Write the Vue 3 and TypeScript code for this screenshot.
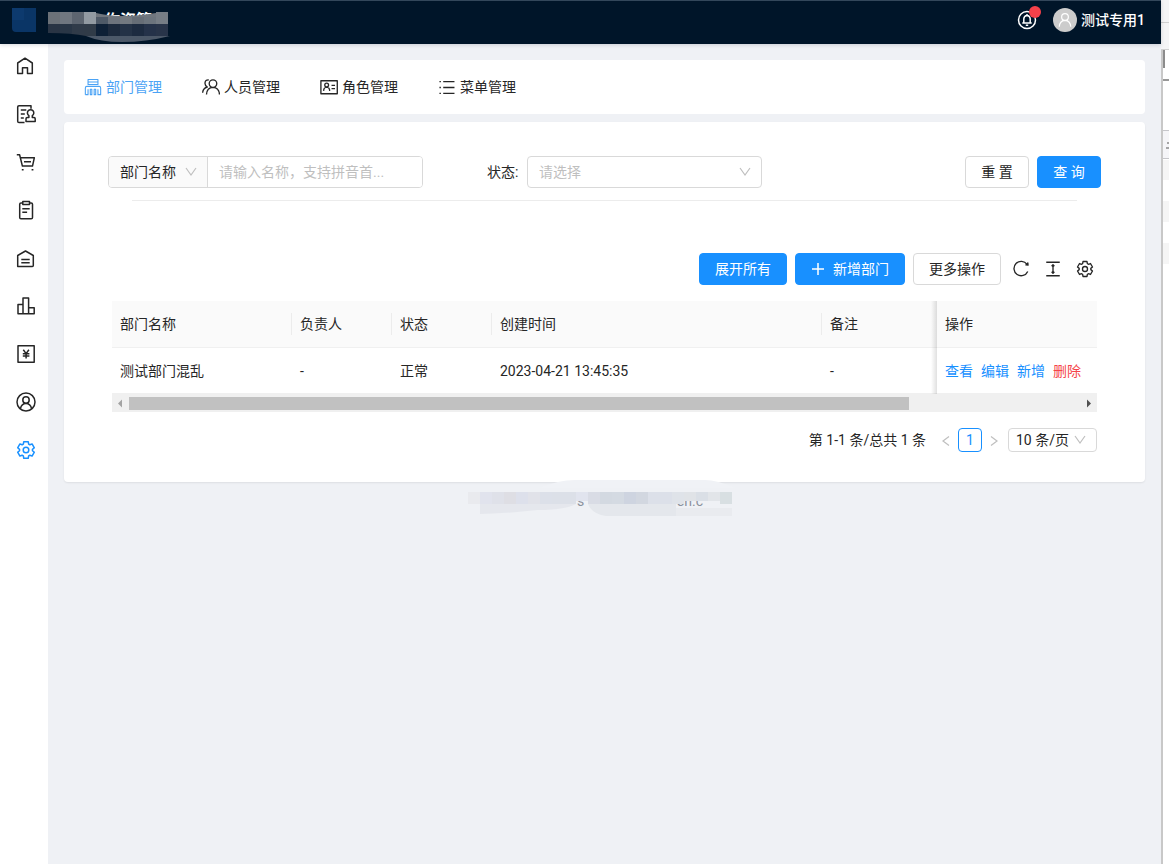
<script setup lang="ts">
import { ref } from 'vue'

function gearPath(): string {
  const points: string[] = []
  for (let i = 0; i < 6; i++) {
    for (const [r, offset] of [[6.5, -24], [8.6, -15], [8.6, 15], [6.5, 24]]) {
      const a = ((i * 60 + offset - 90) * Math.PI) / 180
      points.push(`${(10 + r * Math.cos(a)).toFixed(2)} ${(10 + r * Math.sin(a)).toFixed(2)}`)
    }
  }
  return `M${points.join('L')}Z`
}

const gear = gearPath() + 'M12.800 10a2.800 2.800 0 1 1-5.600 0a2.800 2.800 0 0 1 5.600 0z'

const sideItems = [
  { label: '首页', d: 'M1.7 17.5V7L9 2.2l7.3 4.8V17.5H11.5V11.8h-5v5.7H1.7z' },
  { label: '审核', d: 'M15 4.8V1.7H3q-1.3 0-1.3 1.3V17.3q0 1.3 1.3 1.3H8.5M4.8 6h5.5M4.8 10h4M4.8 14h3M12.9 13.6V11.6a3.2 3.2 0 1 1 3.4 0v2h1.7q1.2 0 1.2 1.2v2.6h-9.2v-2.6q0-1.2 1.2-1.2z' },
  { label: '采购', d: 'M.8 2.7H3.6L6.4 14.1H16.5L18.3 5.8H4.4M8 9.8h7M5.8 17.8h1.8M15.6 17.8h1.8' },
  { label: '单据', d: 'M6.8 3H5q-1.3 0-1.3 1.3V17.5q0 1.3 1.3 1.3H15.2q1.3 0 1.3-1.3V4.3q0-1.3-1.3-1.3H13.5M6.8 1.5h6.7v3H6.8zM6.3 8.7h7.4M6.3 12.3h4.8' },
  { label: '仓库', d: 'M1.7 18.5V7.5L9.5 3l7.8 4.5V17.5q0 1-1 1zM5.3 11.5h8.4M5.3 14.7h8.4' },
  { label: '统计', d: 'M2 8.5h5v9.3H2zM7 2h5.6v15.8H7zM12.6 11.7h5.6v6.1h-5.6z' },
  { label: '财务', d: 'M2 1.8h16.2v16.4H2zM7.3 5.8l2.8 3.8l2.8-3.8M10.1 9.6v5M6.8 9.8h6.6M6.8 12.1h6.6' },
  { label: '用户', d: 'M19 10a9 9 0 1 1-18 0a9 9 0 0 1 18 0zM13.2 8a3.2 3.2 0 1 1-6.4 0a3.2 3.2 0 0 1 6.4 0zM4.4 16.8q1.1-5.2 5.6-5.2t5.6 5.2' },
  { label: '设置', d: gear },
]

const tabs = [
  { label: '部门管理', thin: true, d: 'M4.5 1.7h11v5.6h-11zM4.5 4.5h11M1.5 18.5V11q0-1.700 1.700-1.700h13.600q1.700 0 1.700 1.700V18.500h-3V12.500M1.500 18.500h3V12.500M7 18.500V12.500h1.700v6zM11.300 18.500V12.500H13v6z' },
  { label: '人员管理', d: 'M16.4 6.2a4.2 4.2 0 1 1-8.4 0a4.2 4.2 0 0 1 8.4 0zM5 18.3q.4-7.7 7.2-7.9q6.8.2 7.2 7.9M7.5 2.2q-3.9-.4-4.2 3.5q-.1 2.8 2.6 4.3q-4.8 1.4-5.2 6.4' },
  { label: '角色管理', d: 'M1 3h18.2v14.5H1zM9.5 7.8a2.1 2.1 0 1 1-4.2 0a2.1 2.1 0 0 1 4.2 0zM4 14.3q.2-4 3.4-4.2q3.2.2 3.4 4.2M12.8 8.2h3.9M12.8 11.8h3.9' },
  { label: '菜单管理', d: 'M5.8 4h12.5M5.8 10.5h12.5M5.8 17h12.5M1.6 4h1.6M1.6 10.5h1.6M1.6 17h1.6' },
]

const tools = [
  { label: '刷新', d: 'M16.7 4.8A8 8 0 1 0 17.5 12.8M15.5 5.5l2.3.2l-.2-2.4z' },
  { label: '密度', d: 'M2.5 2.5h15M2.5 17.5h15M10 5.5v9M8.5 7l1.5-1.7l1.5 1.7M8.5 13l1.5 1.7l1.5-1.7' },
  { label: '列设置', d: gear },
]

const rows = [
  { name: '测试部门混乱', owner: '-', status: '正常', created: '2023-04-21 13:45:35', remark: '-' },
]

const keyword = ref('')
const status = ref('')
const activeTab = ref(0)

const titleTop = ['#6b7178', '#707780', '#5d6570', '#929aa2', '#4e5967', '#6d737c', '#737980', '#666d76', '#6c747d', '#767d85']
const titleBottom = ['#293444', '#293646', '#303b49', '#303b48', '#0e2036', '#1d2a3d', '#243246', '#1d2b40', '#253249', '#283449']
const footTop = ['#e9eaee', '#e1e3ed', '#dfe1e9', '#dedee4', '#dde0eb', '#e1e2e9', '#dce0e9', '#dce0e8', '#dce0e8', '#e1e4ee', '#d9dce5', '#d3d9e1', '#d4dae2', '#ced4e0', '#d2d7e0', '#dce0e9', '#dce0e9', '#dfe3e9', '#e0e3e7', '#dadfe6', '#e2e5e9', '#d8dfe2']
</script>

<template>
  <div class="window">
    <div class="app">
      <header class="topbar">
        <svg class="brand" width="180" height="44" viewBox="0 0 180 44" aria-hidden="true">
          <path d="M12 8h12v16H12z" fill="#0d3a6e" />
          <path d="M24 8h12v24H24zM12 20h12v12h-8q-4 0-4-4z" fill="#0a3566" />
          <text class="brand-text" x="104" y="26">作资管</text>
          <rect v-for="(c, i) in titleBottom" :key="'b' + i" :x="48 + i * 12" y="23" width="12" height="13" :fill="c" />
          <path d="M48 33q24 0 38 3H48z" fill="#001529" />
          <rect v-for="(c, i) in titleTop" :key="'t' + i" :x="48 + i * 12" :y="i < 4 || i > 8 ? 12 : 16" width="12" :height="i < 4 || i > 8 ? 12 : 8" :fill="c" />
          <path d="M96 13q24 6 60 0v4H96z" fill="#70767e" />
          <path d="M86 36h84q-24 6-48 6q-22 0-36-6z" fill="#4c5868" />
        </svg>
        <div class="account">
          <button class="bell" type="button" aria-label="通知">
            <svg width="20" height="20" viewBox="0 0 20 20" class="line"><path d="M18.5 10a8.5 8.5 0 1 1-17 0a8.5 8.5 0 0 1 17 0zM6.8 12.8V8.8q.2-3.2 3.2-3.4q3 .2 3.2 3.4v4M5.3 13.1h9.4M10 5.3V4M8.8 15.3h2.4" /></svg>
            <span class="dot"></span>
          </button>
          <span class="avatar">
            <svg width="16" height="16" viewBox="0 0 20 20" class="line"><path d="M14.2 6.2a4.2 4.2 0 1 1-8.4 0a4.2 4.2 0 0 1 8.4 0zM2.8 18.5q.4-7.6 7.2-8.1q6.8.5 7.2 8.1" /></svg>
          </span>
          <span class="user">测试专用1</span>
        </div>
      </header>

      <div class="body">
        <nav class="side">
          <a v-for="(item, i) in sideItems" :key="item.label" href="#" :class="{ active: i === 8 }" :aria-label="item.label">
            <svg width="20" height="20" viewBox="0 0 20 20" class="line"><path :d="item.d" /></svg>
          </a>
        </nav>

        <main>
          <nav class="card tabs">
            <a v-for="(tab, i) in tabs" :key="tab.label" href="#" :class="{ active: i === activeTab }" @click.prevent="activeTab = i">
              <svg width="18" height="18" viewBox="0 0 20 20" class="line" :class="{ thin: tab.thin }"><path :d="tab.d" /></svg>
              {{ tab.label }}
            </a>
          </nav>

          <section class="card content">
            <form class="filters" @submit.prevent>
              <div class="combo">
                <span class="picker prefix">
                  <select aria-label="搜索字段"><option>部门名称</option></select>
                  <svg class="arrow" width="12" height="12" viewBox="0 0 12 12"><path d="M1 2l5 7l5-7" /></svg>
                </span>
                <input v-model="keyword" type="text" aria-label="部门名称" placeholder="请输入名称，支持拼音首..." />
              </div>
              <label class="status-label" for="status">状态:</label>
              <span class="picker status">
                <select id="status" v-model="status" class="empty"><option value="">请选择</option></select>
                <svg class="arrow" width="12" height="12" viewBox="0 0 12 12"><path d="M1 2l5 7l5-7" /></svg>
              </span>
              <div class="filter-actions">
                <button class="btn" type="reset">重 置</button>
                <button class="btn primary" type="submit">查 询</button>
              </div>
            </form>
            <hr />

            <div class="toolbar">
              <button class="btn primary" type="button">展开所有</button>
              <button class="btn primary" type="button">
                <svg width="14" height="14" viewBox="0 0 14 14" class="plus"><path d="M7 1v12M1 7h12" /></svg>
                新增部门
              </button>
              <button class="btn" type="button">更多操作</button>
              <button v-for="tool in tools" :key="tool.label" class="tool" type="button" :aria-label="tool.label">
                <svg width="18" height="18" viewBox="0 0 20 20" class="line"><path :d="tool.d" /></svg>
              </button>
            </div>

            <div class="table-area">
              <table>
                <colgroup>
                  <col class="c-name" /><col class="c-small" /><col class="c-small" /><col class="c-time" /><col /><col class="c-ops" />
                </colgroup>
                <thead>
                  <tr>
                    <th><span>部门名称</span></th>
                    <th><span>负责人</span></th>
                    <th><span>状态</span></th>
                    <th><span>创建时间</span></th>
                    <th>备注</th>
                    <th class="fixed">操作</th>
                  </tr>
                </thead>
                <tbody>
                  <tr v-for="row in rows" :key="row.name">
                    <td>{{ row.name }}</td>
                    <td>{{ row.owner }}</td>
                    <td>{{ row.status }}</td>
                    <td>{{ row.created }}</td>
                    <td>{{ row.remark }}</td>
                    <td class="fixed">
                      <div class="ops">
                        <a href="#">查看</a><a href="#">编辑</a><a href="#">新增</a><a href="#" class="danger">删除</a>
                      </div>
                    </td>
                  </tr>
                </tbody>
              </table>
              <div class="scrollbar" aria-hidden="true">
                <svg width="17" height="18" viewBox="0 0 17 18"><path d="M10 5.5v8L6 9.5z" fill="#a3a3a3" /></svg>
                <div class="track"><div class="thumb"></div></div>
                <svg width="17" height="18" viewBox="0 0 17 18"><path d="M7 5.5v8l4-4z" fill="#505050" /></svg>
              </div>

              <div class="pagination">
                <span class="total">第 1-1 条/总共 1 条</span>
                <button class="step" type="button" aria-label="上一页"><svg width="12" height="12" viewBox="0 0 12 12"><path d="M9 2.5L3 7l6 4.5" /></svg></button>
                <button class="page" type="button">1</button>
                <button class="step" type="button" aria-label="下一页"><svg width="12" height="12" viewBox="0 0 12 12"><path d="M3 2.5l6 4.5L3 11.5" /></svg></button>
                <span class="picker size">
                  <select aria-label="每页条数"><option>10 条/页</option></select>
                  <svg class="arrow" width="12" height="12" viewBox="0 0 12 12"><path d="M1 2l5 7l5-7" /></svg>
                </span>
              </div>
            </div>
          </section>

          <footer>
            <svg width="320" height="38" viewBox="0 0 320 38" aria-hidden="true">
              <path d="M90 8Q108 0 125 0h130q12 0 30 8z" fill="#f0f2f6" />
              <text class="foot-text" x="127" y="26">s</text>
              <text class="foot-text" x="227" y="26">sn.c</text>
              <path d="M30 24h96q-12 6-38 6q-38 4-58 4z" fill="#e5e7ed" />
              <path d="M138 24h88v12h-70q-14-2-18-12z" fill="#e4e7ec" />
              <path d="M226 28h56v8h-56z" fill="#e9ebef" />
              <rect v-for="(c, i) in footTop" :key="i" :x="18 + i * 12" y="12" width="12" :height="i === 9 || i === 18 || i === 19 || i === 20 ? 9 : 12" :fill="c" />
            </svg>
          </footer>
        </main>
      </div>
    </div>

    <aside class="edge" aria-hidden="true">
      <svg width="8" height="280" viewBox="0 0 8 280">
        <path d="M0 0h8v50H0z" fill="#f5f5f6" />
        <path d="M0 22h8v1H0zM0 49h8v1H0z" fill="#d0d0d0" />
        <path d="M0 50h2v230H0z" fill="#c8c8c8" />
        <path d="M2 50h2v18H2z" fill="#8c8c8c" />
        <path d="M2 79h6v2H2z" fill="#989898" />
        <path d="M2 130h6v29H2z" fill="#f5f5f8" />
        <path d="M2 130h6v1H2zM2 158h6v1H2z" fill="#c6c6ca" />
        <path d="M6 143h2M5 148h3" stroke="#555" />
        <path d="M2 160h6v20H2zM2 201h6v21H2zM2 243h6v21H2z" fill="#f5f5f5" />
      </svg>
    </aside>
  </div>
</template>

<style>
body {
  margin: 0;
}
</style>

<style scoped>
* {
  box-sizing: border-box;
}
.window {
  display: flex;
  min-height: 100vh;
  background: #fff;
  color: #262626;
  font: 14px/22px Roboto, "Noto Sans CJK SC", sans-serif;
}
.app {
  flex: 1;
  min-width: 0;
  display: flex;
  flex-direction: column;
  background: #eff1f5;
}
.edge {
  width: 8px;
  background: linear-gradient(to right, #c8c8c8 2px, #fff 2px);
}
.edge svg,
.brand {
  display: block;
}
a {
  color: inherit;
  text-decoration: none;
}
button,
input,
select {
  margin: 0;
  font: inherit;
  color: inherit;
}
.line {
  display: block;
  fill: none;
  stroke: currentColor;
  stroke-width: 1.5;
  stroke-linejoin: round;
}
.line.thin {
  stroke-width: 1.2;
}
.topbar {
  position: relative;
  height: 44px;
  display: flex;
  justify-content: space-between;
  background: #001529;
  border-top: 1px solid #33475b;
  box-shadow: 0 1px 4px rgba(0, 21, 41, 0.16);
}
.brand {
  margin-top: -1px;
}
.brand-text {
  font-size: 16px;
  font-weight: 700;
  fill: #fff;
}
.account {
  display: flex;
  align-items: center;
  height: 38px;
  padding-right: 16px;
  color: #fff;
}
.bell {
  position: relative;
  width: 20px;
  height: 20px;
  padding: 0;
  border: 0;
  background: none;
  margin-right: 16px;
}
.dot {
  position: absolute;
  top: -4px;
  right: -4px;
  width: 12px;
  height: 12px;
  border-radius: 50%;
  background: #f5414a;
}
.avatar {
  display: grid;
  place-items: center;
  width: 24px;
  height: 24px;
  margin-right: 4px;
  border-radius: 50%;
  background: #ccc;
}
.user {
  font-weight: 500;
}
.body {
  flex: 1;
  display: flex;
}
.side {
  width: 48px;
  display: flex;
  flex-direction: column;
  gap: 8px;
  padding-top: 2px;
  background: #fff;
}
.side a {
  height: 40px;
  display: flex;
  align-items: center;
  padding-left: 16px;
}
.side .active {
  color: #1890ff;
}
.tabs .active {
  color: #4ba3f5;
}
main {
  flex: 1;
  min-width: 0;
  padding: 16px 16px 0;
}
.card {
  background: #fff;
  border-radius: 4px;
}
.tabs {
  display: flex;
  gap: 40px;
  padding: 16px 20px;
  margin-bottom: 8px;
}
.tabs a {
  display: flex;
  align-items: center;
  gap: 4px;
}
.content {
  padding: 34px 44px 30px;
  box-shadow: 0 1px 2px rgba(0, 0, 0, 0.08);
}
.filters {
  display: flex;
  align-items: center;
}
.combo {
  display: flex;
  width: 315px;
  height: 32px;
  border: 1px solid #d9d9d9;
  border-radius: 4px;
  overflow: hidden;
}
.combo input {
  flex: 1;
  min-width: 0;
  border: 0;
  padding: 0 11px;
  background: #fff;
  outline: none;
}
.combo input::placeholder {
  color: #bfbfbf;
  opacity: 1;
}
.picker {
  display: grid;
  align-items: center;
}
.picker select,
.picker .arrow {
  grid-area: 1 / 1;
}
.picker select {
  width: 100%;
  height: 100%;
  padding: 0 11px;
  border: 0;
  background: none;
  appearance: none;
  outline: none;
}
.arrow {
  justify-self: end;
  margin-right: 10px;
  pointer-events: none;
}
.arrow path,
.step path {
  fill: none;
  stroke: #bfbfbf;
  stroke-width: 1.2;
}
.prefix {
  width: 99px;
  background: #fafafa;
  border-right: 1px solid #d9d9d9;
}
.status-label {
  margin-left: 64px;
  width: 40px;
}
.status {
  width: 235px;
  height: 32px;
  border: 1px solid #d9d9d9;
  border-radius: 4px;
}
.picker .empty {
  color: #bfbfbf;
}
.filter-actions {
  display: flex;
  gap: 8px;
  margin-left: auto;
}
.btn {
  display: flex;
  align-items: center;
  justify-content: center;
  gap: 8px;
  min-width: 64px;
  height: 32px;
  padding: 0 15px;
  border: 1px solid #d9d9d9;
  border-radius: 4px;
  background: #fff;
}
.btn.primary {
  color: #fff;
  background: #1890ff;
  border-color: #1890ff;
}
.plus {
  fill: none;
  stroke: currentColor;
  stroke-width: 1.5;
}
hr {
  height: 1px;
  margin: 12px 24px 52px;
  border: 0;
  background: #ececec;
}
.toolbar {
  display: flex;
  justify-content: flex-end;
  gap: 8px;
  margin-bottom: 16px;
  padding-right: 4px;
}
.tool {
  width: 24px;
  padding: 0 3px;
  border: 0;
  background: none;
}
.table-area {
  margin: 0 4px;
}
table {
  width: 100%;
  table-layout: fixed;
  border-collapse: separate;
  border-spacing: 0;
}
.c-name {
  width: 180px;
}
.c-small {
  width: 100px;
}
.c-time {
  width: 330px;
}
.c-ops {
  width: 160px;
}
th,
td {
  height: 46px;
  padding: 0 0 0 8px;
  font-weight: 400;
  text-align: left;
  border-bottom: 1px solid #f0f0f0;
}
th {
  height: 47px;
  background: #fafafa;
}
th span {
  display: block;
  border-right: 1px solid #ececec;
}
.fixed {
  position: relative;
}
.fixed::before {
  content: "";
  position: absolute;
  top: 0;
  bottom: -1px;
  left: -6px;
  width: 6px;
  background: linear-gradient(to left, rgba(0, 0, 0, 0.12), rgba(0, 0, 0, 0));
}
.ops {
  display: flex;
  gap: 8px;
  color: #1890ff;
}
.danger {
  color: #f5444a;
}
.scrollbar {
  display: flex;
  height: 18px;
  background: #f0f0f0;
}
.track {
  flex: 1;
  padding: 3px 0 2px;
}
.thumb {
  width: 82%;
  height: 13px;
  background: #c1c1c1;
}
.pagination {
  display: flex;
  align-items: center;
  justify-content: flex-end;
  height: 24px;
  margin-top: 16px;
}
.total {
  margin-right: 8px;
}
.step {
  display: grid;
  place-items: center;
  width: 24px;
  height: 24px;
  padding: 0;
  border: 0;
  background: none;
}
.page {
  width: 24px;
  height: 24px;
  padding: 0;
  border: 1px solid #1890ff;
  border-radius: 4px;
  background: #fff;
  color: #1890ff;
}
.size {
  width: 89px;
  height: 24px;
  margin-left: 2px;
  border: 1px solid #d9d9d9;
  border-radius: 4px;
}
.size select {
  padding: 0 7px;
}
footer {
  display: flex;
  justify-content: center;
  margin-top: -2px;
  padding-left: 10px;
}
.foot-text {
  font-size: 14px;
  fill: #8c919c;
}
</style>
